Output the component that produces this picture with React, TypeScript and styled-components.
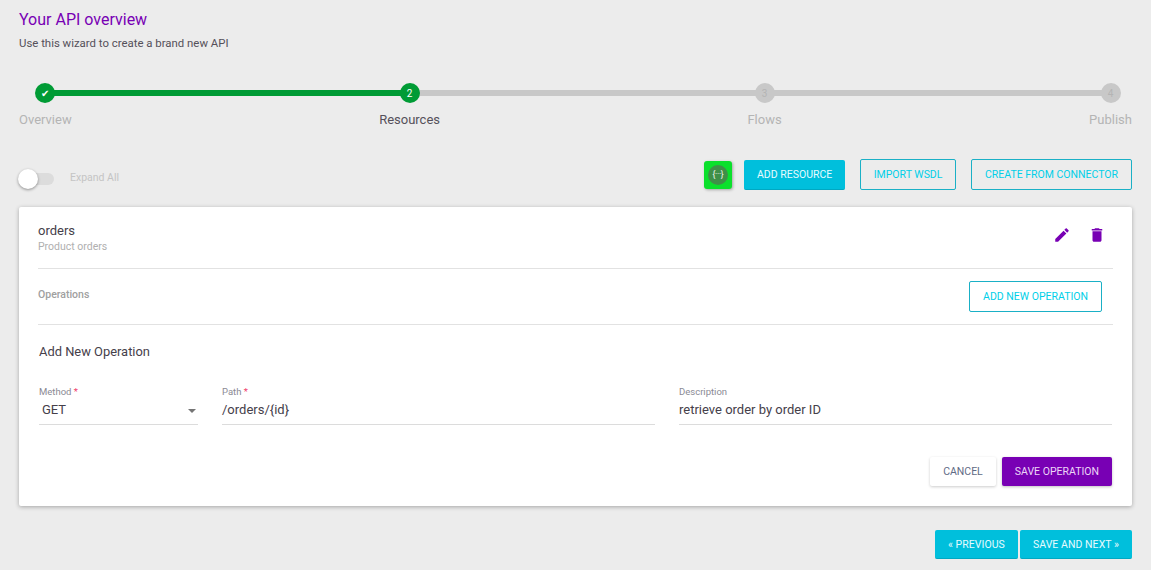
import React from "react";
import styled, { createGlobalStyle, css } from "styled-components";

const purple = "#7800b4";
const cyan = "#00bfdc";

const GlobalStyle = createGlobalStyle`
  html, body {
    margin: 0;
    padding: 0;
    background: #ececec;
    font-family: Roboto, "Liberation Sans", sans-serif;
  }
`;

const steps = [
  { label: "Overview", mark: "✔", done: true },
  { label: "Resources", mark: "2", current: true, done: true },
  { label: "Flows", mark: "3" },
  { label: "Publish", mark: "4" },
];

const App = () => (
  <Page>
    <GlobalStyle />
    <Title>Your API overview</Title>
    <Subtitle>Use this wizard to create a brand new API</Subtitle>

    <Stepper>
      <Track>
        <TrackDone />
      </Track>
      {steps.map((step) => (
        <Step key={step.label}>
          <StepDot $done={step.done}>{step.mark}</StepDot>
          <StepLabel $current={step.current}>{step.label}</StepLabel>
        </Step>
      ))}
    </Stepper>

    <Toolbar>
      <ToggleWrap>
        <ToggleTrack>
          <ToggleKnob />
        </ToggleTrack>
        <ToggleLabel>Expand All</ToggleLabel>
      </ToggleWrap>
      <SwaggerButton>
        <SwaggerDot>{"{···}"}</SwaggerDot>
      </SwaggerButton>
      <Button $variant="solid">ADD RESOURCE</Button>
      <Button $variant="outline">IMPORT WSDL</Button>
      <Button $variant="outline">CREATE FROM CONNECTOR</Button>
    </Toolbar>

    <Card>
      <ResourceHead>
        <div>
          <ResourceName>orders</ResourceName>
          <ResourceDesc>Product orders</ResourceDesc>
        </div>
        <IconRow>
          <Icon viewBox="0 0 24 24">
            <path d="M3 17.25V21h3.75L17.81 9.94l-3.75-3.75L3 17.25zM20.71 7.04c.39-.39.39-1.02 0-1.41l-2.34-2.34c-.39-.39-1.02-.39-1.41 0l-1.83 1.83 3.75 3.75 1.83-1.83z" />
          </Icon>
          <Icon viewBox="0 0 24 24">
            <path d="M6 19c0 1.1.9 2 2 2h8c1.1 0 2-.9 2-2V7H6v12zM19 4h-3.5l-1-1h-5l-1 1H5v2h14V4z" />
          </Icon>
        </IconRow>
      </ResourceHead>

      <OperationsRow>
        <OperationsLabel>Operations</OperationsLabel>
        <Button $variant="outline">ADD NEW OPERATION</Button>
      </OperationsRow>

      <FormArea>
        <FormTitle>Add New Operation</FormTitle>
        <Fields>
          <Field>
            <FieldLabel>
              Method <Required>*</Required>
            </FieldLabel>
            <FieldValue $indent>
              GET
              <Caret />
            </FieldValue>
          </Field>
          <Field>
            <FieldLabel>
              Path <Required>*</Required>
            </FieldLabel>
            <FieldValue>/orders/{"{id}"}</FieldValue>
          </Field>
          <Field>
            <FieldLabel>Description</FieldLabel>
            <FieldValue>retrieve order by order ID</FieldValue>
          </Field>
        </Fields>
        <FormActions>
          <Button $variant="plain">CANCEL</Button>
          <Button $variant="purple">SAVE OPERATION</Button>
        </FormActions>
      </FormArea>
    </Card>

    <Footer>
      <FooterButton $variant="solid">« PREVIOUS</FooterButton>
      <FooterButton $variant="solid">SAVE AND NEXT »</FooterButton>
    </Footer>
  </Page>
);

const Page = styled.div`
  box-sizing: border-box;
  width: 1151px;
  height: 570px;
  overflow: hidden;
  padding: 10px 19px 0;
`;

const Title = styled.h1`
  margin: 0;
  font-size: 16px;
  line-height: 19px;
  font-weight: 400;
  color: ${purple};
`;

const Subtitle = styled.p`
  margin: 7px 0 0;
  font-size: 11.4px;
  line-height: 14px;
  color: #55505a;
`;

const Stepper = styled.div`
  position: relative;
  display: flex;
  justify-content: space-between;
  margin-top: 33px;
`;

const Track = styled.div`
  position: absolute;
  top: 7px;
  left: 26px;
  right: 22px;
  height: 6px;
  background: #c8c8c8;
`;

const TrackDone = styled.div`
  width: 364px;
  height: 100%;
  background: #009b35;
`;

const Step = styled.div`
  position: relative;
  display: flex;
  flex-direction: column;
  align-items: center;
`;

const StepDot = styled.div<{ $done?: boolean }>`
  width: 20px;
  height: 20px;
  border-radius: 50%;
  display: flex;
  align-items: center;
  justify-content: center;
  font-size: 10px;
  background: ${(p) => (p.$done ? "#009b35" : "#c8c8c8")};
  color: ${(p) => (p.$done ? "#fff" : "#b4b4b4")};
`;

const StepLabel = styled.div<{ $current?: boolean }>`
  margin-top: 9px;
  font-size: 13px;
  line-height: 15px;
  color: ${(p) => (p.$current ? "#55505a" : "#b4b4b4")};
`;

const Toolbar = styled.div`
  display: flex;
  align-items: center;
  height: 31px;
  margin-top: 32px;
`;

const ToggleWrap = styled.div`
  display: flex;
  align-items: center;
  margin-top: 8px;
  margin-right: auto;
`;

const ToggleTrack = styled.div`
  position: relative;
  width: 35px;
  height: 12px;
  border-radius: 6px;
  background: #dcdcdc;
`;

const ToggleKnob = styled.div`
  position: absolute;
  left: -1px;
  top: -4px;
  width: 20px;
  height: 20px;
  border-radius: 50%;
  background: #fff;
  box-shadow: 0 1px 3px rgba(0, 0, 0, 0.4);
`;

const ToggleLabel = styled.span`
  margin-left: 16px;
  margin-bottom: 3px;
  font-size: 10.5px;
  color: #c4c4c4;
`;

const SwaggerButton = styled.div`
  width: 28px;
  height: 28px;
  margin-right: 12px;
  border-radius: 3px;
  background: #0be02c;
  box-shadow: 1px 1px 3px rgba(0, 0, 0, 0.3);
  display: flex;
  align-items: center;
  justify-content: center;
`;

const SwaggerDot = styled.div`
  width: 20px;
  height: 20px;
  border-radius: 50%;
  background: #3f8f48;
  color: #f2fbf2;
  font-size: 8.5px;
  line-height: 19px;
  text-align: center;
  letter-spacing: -0.3px;
  white-space: nowrap;
`;

const variants = {
  solid: css`
    height: 30px;
    padding: 0 13px;
    background: ${cyan};
    color: #e6fbff;
    border-bottom: 1px solid #00a8c2;
  `,
  outline: css`
    height: 31px;
    padding: 0 13px;
    background: transparent;
    color: #00cfe8;
    border: 1px solid #1ab0c6;
    margin-left: 14.5px;
  `,
  plain: css`
    height: 29px;
    padding: 0 13px;
    background: #fff;
    color: #5f6b85;
    box-shadow: 0 1px 3px rgba(0, 0, 0, 0.2);
  `,
  purple: css`
    height: 29px;
    padding: 0 13px;
    background: ${purple};
    color: #ecd6f7;
    box-shadow: 0 1px 3px rgba(0, 0, 0, 0.25);
  `,
};

const Button = styled.button<{ $variant: keyof typeof variants }>`
  box-sizing: border-box;
  border: none;
  border-radius: 2px;
  font-family: inherit;
  font-size: 10.5px;
  white-space: nowrap;
  ${(p) => variants[p.$variant]}
`;

const FooterButton = styled(Button)`
  height: 29px;
  letter-spacing: 0.05px;
`;

const Card = styled.section`
  box-sizing: border-box;
  height: 299px;
  margin-top: 17px;
  padding: 0 19px;
  background: #fff;
  border-radius: 2px;
  box-shadow: 0 1px 4px rgba(0, 0, 0, 0.3);
`;

const ResourceHead = styled.div`
  box-sizing: border-box;
  height: 62px;
  padding-top: 16px;
  display: flex;
  justify-content: space-between;
  border-bottom: 1px solid #e2e2e2;
`;

const ResourceName = styled.div`
  font-size: 13px;
  line-height: 16px;
  color: #45404a;
`;

const ResourceDesc = styled.div`
  font-size: 10.5px;
  line-height: 15px;
  color: #b0b0b0;
`;

const IconRow = styled.div`
  display: flex;
  gap: 17px;
  height: 18px;
  margin-right: 7px;
  margin-top: 3px;
`;

const Icon = styled.svg`
  width: 18px;
  height: 18px;
  fill: ${purple};
`;

const OperationsRow = styled.div`
  box-sizing: border-box;
  height: 56px;
  padding-right: 11px;
  display: flex;
  justify-content: space-between;
  align-items: center;
  border-bottom: 1px solid #e2e2e2;
`;

const OperationsLabel = styled.div`
  font-size: 10.5px;
  font-weight: 500;
  color: #a0a0a0;
  align-self: flex-start;
  margin-top: 19px;
`;

const FormArea = styled.div`
  padding: 19px 1px 0;
`;

const FormTitle = styled.h3`
  margin: 0;
  font-size: 12.9px;
  line-height: 16px;
  font-weight: 400;
  color: #45404a;
`;

const Fields = styled.div`
  display: grid;
  grid-template-columns: 159px 433px 433px;
  column-gap: 24px;
  margin-top: 26px;
`;

const Field = styled.div`
  border-bottom: 1px solid #dcdcdc;
  height: 38px;
`;

const FieldLabel = styled.div`
  font-size: 9.5px;
  line-height: 12px;
  color: #8a8a94;
`;

const Required = styled.span`
  color: #f0406a;
`;

const FieldValue = styled.div<{ $indent?: boolean }>`
  position: relative;
  margin-top: 4px;
  padding-left: ${(p) => (p.$indent ? "3px" : "0")};
  font-size: 13px;
  line-height: 16px;
  color: #45404a;
`;

const Caret = styled.span`
  position: absolute;
  right: 2px;
  top: 7px;
  width: 0;
  height: 0;
  border-left: 4px solid transparent;
  border-right: 4px solid transparent;
  border-top: 4px solid #757575;
`;

const FormActions = styled.div`
  display: flex;
  justify-content: flex-end;
  gap: 6px;
  margin-top: 32px;
`;

const Footer = styled.div`
  display: flex;
  justify-content: flex-end;
  gap: 2px;
  margin-top: 24px;
`;

export default App;
